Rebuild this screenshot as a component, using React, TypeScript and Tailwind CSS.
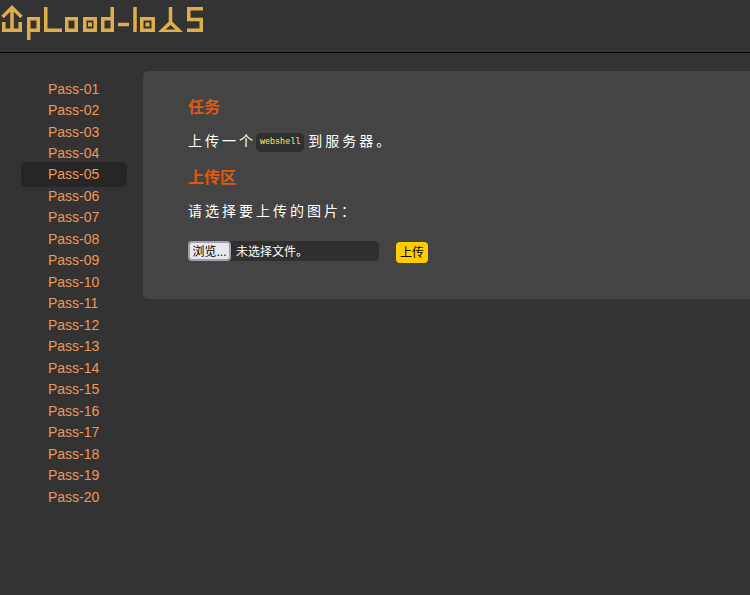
const passes = Array.from({ length: 20 }, (_, i) => `Pass-${String(i + 1).padStart(2, "0")}`);

function Logo() {
  return (
    <svg width="206" height="42" viewBox="0 0 206 42" fill="none" stroke="#dfae4a" strokeWidth="3.500" className="block">
      <path d="M2.500 17 L12 7.500 L21.500 17 M12 8 V31 M3.750 22 V30.250 H20.250 V22" />
      <path d="M28.750 30.250 V18.750 H38.250 V30.250 H28.750 M28.750 30.250 V40" />
      <path d="M45.750 7 V30.250 H62" />
      <rect x="66.750" y="18.750" width="9.500" height="11.500" />
      <rect x="84.750" y="18.750" width="10.500" height="11.500" />
      <rect x="88" y="22.500" width="4" height="4" fill="#dfae4a" stroke="none" />
      <path d="M112.250 7 V30.250 H102.750 V18.750 H112.250" />
      <path d="M118 24.500 H129" />
      <path d="M135 7 V32" />
      <rect x="141.750" y="18.750" width="11.500" height="11.500" />
      <rect x="145.500" y="22.500" width="4" height="4" fill="#dfae4a" stroke="none" />
      <path d="M170.500 7 V22" />
      <path d="M158 32 L170.500 20 L183 32 Z M165.500 29.500 H175.500 L170.500 25 Z" fill="#dfae4a" fillRule="evenodd" stroke="none" />
      <path d="M203 8.750 H188.750 V19.500 H201.250 V30.250 H187" />
    </svg>
  );
}

export default function App() {
  return (
    <div className="h-[595px] w-[750px] overflow-hidden bg-[#333333] font-['Liberation_Sans','Noto_Sans_CJK_SC',sans-serif] text-white">
      <header className="h-[53px] border-b border-black">
        <Logo />
      </header>
      <div className="flex items-start pt-[18px]">
        <nav className="ml-[21px] mt-[7.600px] w-[106px] shrink-0">
          <ul className="flex flex-col">
            {passes.map((p) => (
              <li key={p} className="relative h-[21.47px] pl-[27px] text-sm leading-[21.47px] text-[#f0965a]">
                {p === "Pass-05" && <span className="absolute inset-x-0 top-[-2.400px] h-[25px] rounded-[5px] bg-[#262626]" />}
                <span className="relative">{p}</span>
              </li>
            ))}
          </ul>
        </nav>
        <main className="ml-4 h-[228px] flex-1 rounded-l-[5px] bg-[#444444] pl-[45px] pt-[26px]">
          <h3 className="text-base font-bold leading-[22px] text-[#e0590f]">任务</h3>
          <p className="mt-[10px] flex h-[24px] items-center text-sm tracking-[3px]">
            上传一个
            <code className="mt-[2px] rounded-[5px] bg-[#2f2f2f] px-[4px] py-[3px] font-['Liberation_Mono',monospace] text-[8.400px] leading-[13px] tracking-normal text-[#f5f56e]">webshell</code>
            <span className="ml-[4px]">到服务器。</span>
          </p>
          <h3 className="mt-[14px] text-base font-bold leading-[22px] text-[#e0590f]">上传区</h3>
          <p className="mt-[10px] h-[24px] text-sm leading-[24px] tracking-[3px]">请选择要上传的图片：</p>
          <form className="mt-[18px] flex items-start">
            <div className="flex h-[20px] w-[191px] items-center rounded-[5px] bg-[#2f2f2f] text-xs">
              <span className="flex h-[20px] w-[43px] items-center justify-center rounded-[4px] border-2 border-[#a0a0ac] bg-[#e9e9ed] pt-[2px] text-xs text-black">浏览...</span>
              <span className="ml-[5px] pt-[2px]">未选择文件。</span>
            </div>
            <button type="button" className="ml-[17px] mt-[1px] flex h-[21px] w-[32px] items-center justify-center rounded-[4px] bg-[#ffcc00] text-xs text-black">上传</button>
          </form>
        </main>
      </div>
    </div>
  );
}
